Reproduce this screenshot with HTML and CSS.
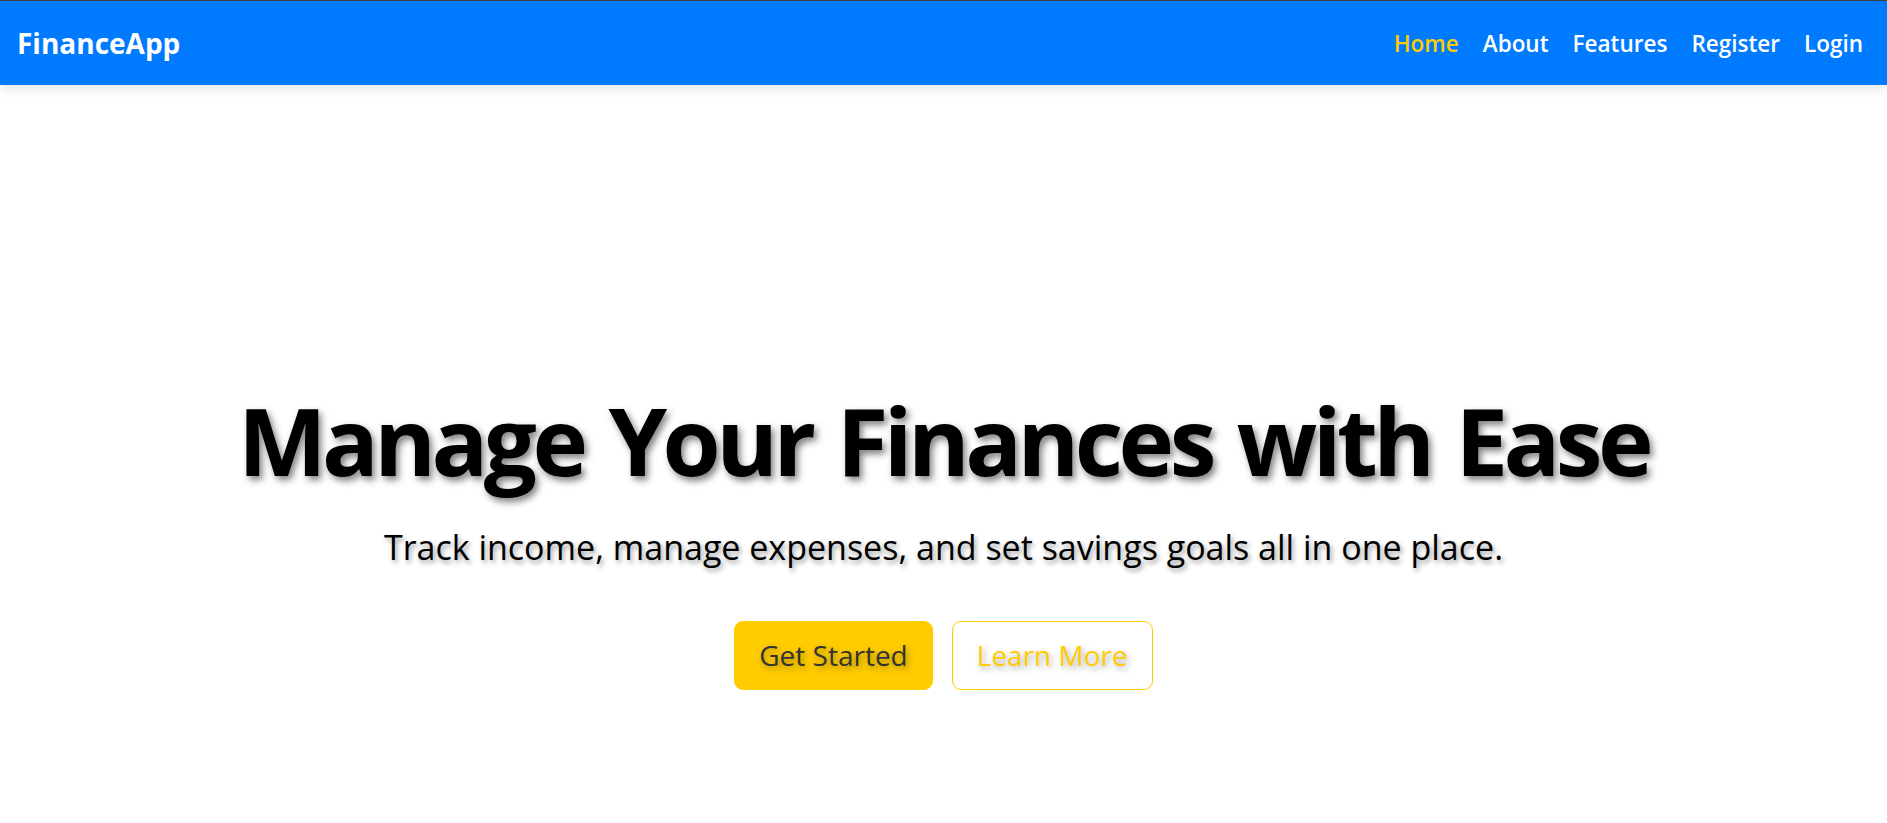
FILE: index.html
```html
<!DOCTYPE html>
<html lang="en">
<head>
<meta charset="utf-8">
<title>FinanceApp</title>
<link rel="stylesheet" href="styles.css">
</head>
<body>
<header class="navbar">
  <a class="brand" href="#">FinanceApp</a>
  <nav class="nav">
    <a class="nav-link active" href="#">Home</a>
    <a class="nav-link" href="#">About</a>
    <a class="nav-link" href="#">Features</a>
    <a class="nav-link" href="#">Register</a>
    <a class="nav-link" href="#">Login</a>
  </nav>
</header>
<main class="hero">
  <h1 class="hero-title">Manage Your Finances with Ease</h1>
  <p class="hero-sub">Track income, manage expenses, and set savings goals all in one place.</p>
  <div class="hero-actions">
    <a class="btn btn-primary" href="#">Get Started</a>
    <a class="btn btn-outline" href="#">Learn More</a>
  </div>
</main>
</body>
</html>
```
FILE: styles.css
```css
* { box-sizing: border-box; }
html, body { margin: 0; padding: 0; }
body {
  font-family: "Open Sans", "Noto Sans", sans-serif;
  background: #ffffff;
  color: #000;
}
a { text-decoration: none; }

.navbar {
  height: 85px;
  border-top: 1px solid #3c4043;
  background: #007bff;
  display: flex;
  align-items: center;
  justify-content: space-between;
  padding: 0 24px 0 17px;
  box-shadow: 0 4px 10px rgba(0, 0, 0, 0.1);
  position: relative;
}
.brand {
  color: #fff;
  font-size: 28px;
  font-weight: 700;
}
.nav {
  display: flex;
  gap: 24px;
}
.nav-link {
  color: #fff;
  font-size: 22.5px;
  font-weight: 600;
}
.nav-link.active { color: #ffcc00; }

.hero {
  text-align: center;
  padding-top: 299px;
}
.hero-title {
  margin: 0;
  font-size: 94px;
  line-height: 1.2;
  font-weight: 700;
  letter-spacing: -4.5px;
  word-spacing: 5px;
  text-shadow: 3px 4px 7px rgba(0, 0, 0, 0.5);
}
.hero-sub {
  margin: 25px 0 0;
  font-size: 34px;
  line-height: 1.5;
  text-shadow: 2px 3px 5px rgba(0, 0, 0, 0.4);
}
.hero-actions {
  margin-top: 48px;
  display: flex;
  justify-content: center;
  gap: 19px;
}
.btn {
  display: inline-flex;
  align-items: center;
  justify-content: center;
  height: 69px;
  padding: 0 24px;
  font-size: 28px;
  border-radius: 9px;
  text-shadow: 2px 3px 6px rgba(0, 0, 0, 0.35);
}
.btn-primary {
  background: #ffcc00;
  color: #333;
  border: 1px solid #ffcc00;
}
.btn-outline {
  background: #fff;
  color: #ffcc00;
  border: 1px solid #ffcc00;
}
```
